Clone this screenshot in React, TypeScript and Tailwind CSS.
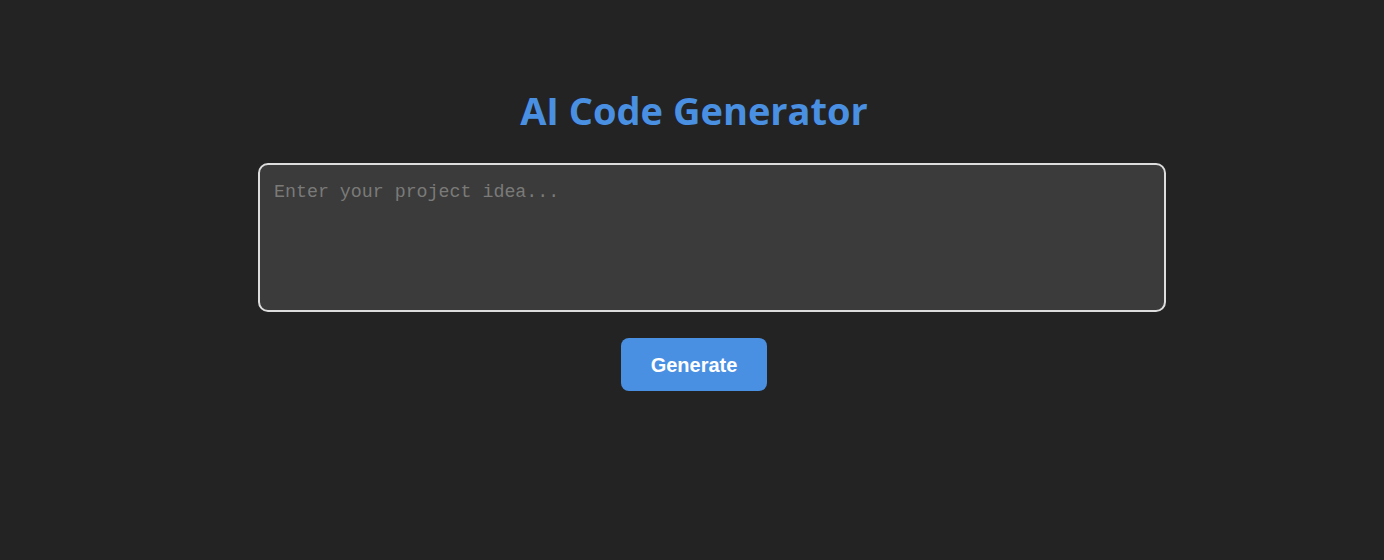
export default function App() {
  return (
    <div className="min-h-[560px] bg-[#232323] flex flex-col items-center pt-[84px] pl-[4px]">
      <h1 className="text-[38px] leading-[52px] font-bold text-[#4a90e2] font-['Open_Sans',sans-serif]">
        AI Code Generator
      </h1>

      <textarea
        className="mt-[27px] ml-[36px] w-[908px] h-[149px] resize-none rounded-[10px] border-2 border-[#dddddd] bg-[#3b3b3b] px-[14px] pt-[14px] pb-[10px] text-[18.3px] leading-[26px] text-white placeholder:text-[#7a7a78] outline-none font-['Liberation_Mono',monospace]"
        placeholder="Enter your project idea..."
      />

      <button className="mt-[26px] w-[146px] h-[53px] rounded-[8px] bg-[#4a90e2] text-[20px] font-bold text-white font-['Liberation_Sans',Arial,sans-serif]">
        Generate
      </button>
    </div>
  );
}
